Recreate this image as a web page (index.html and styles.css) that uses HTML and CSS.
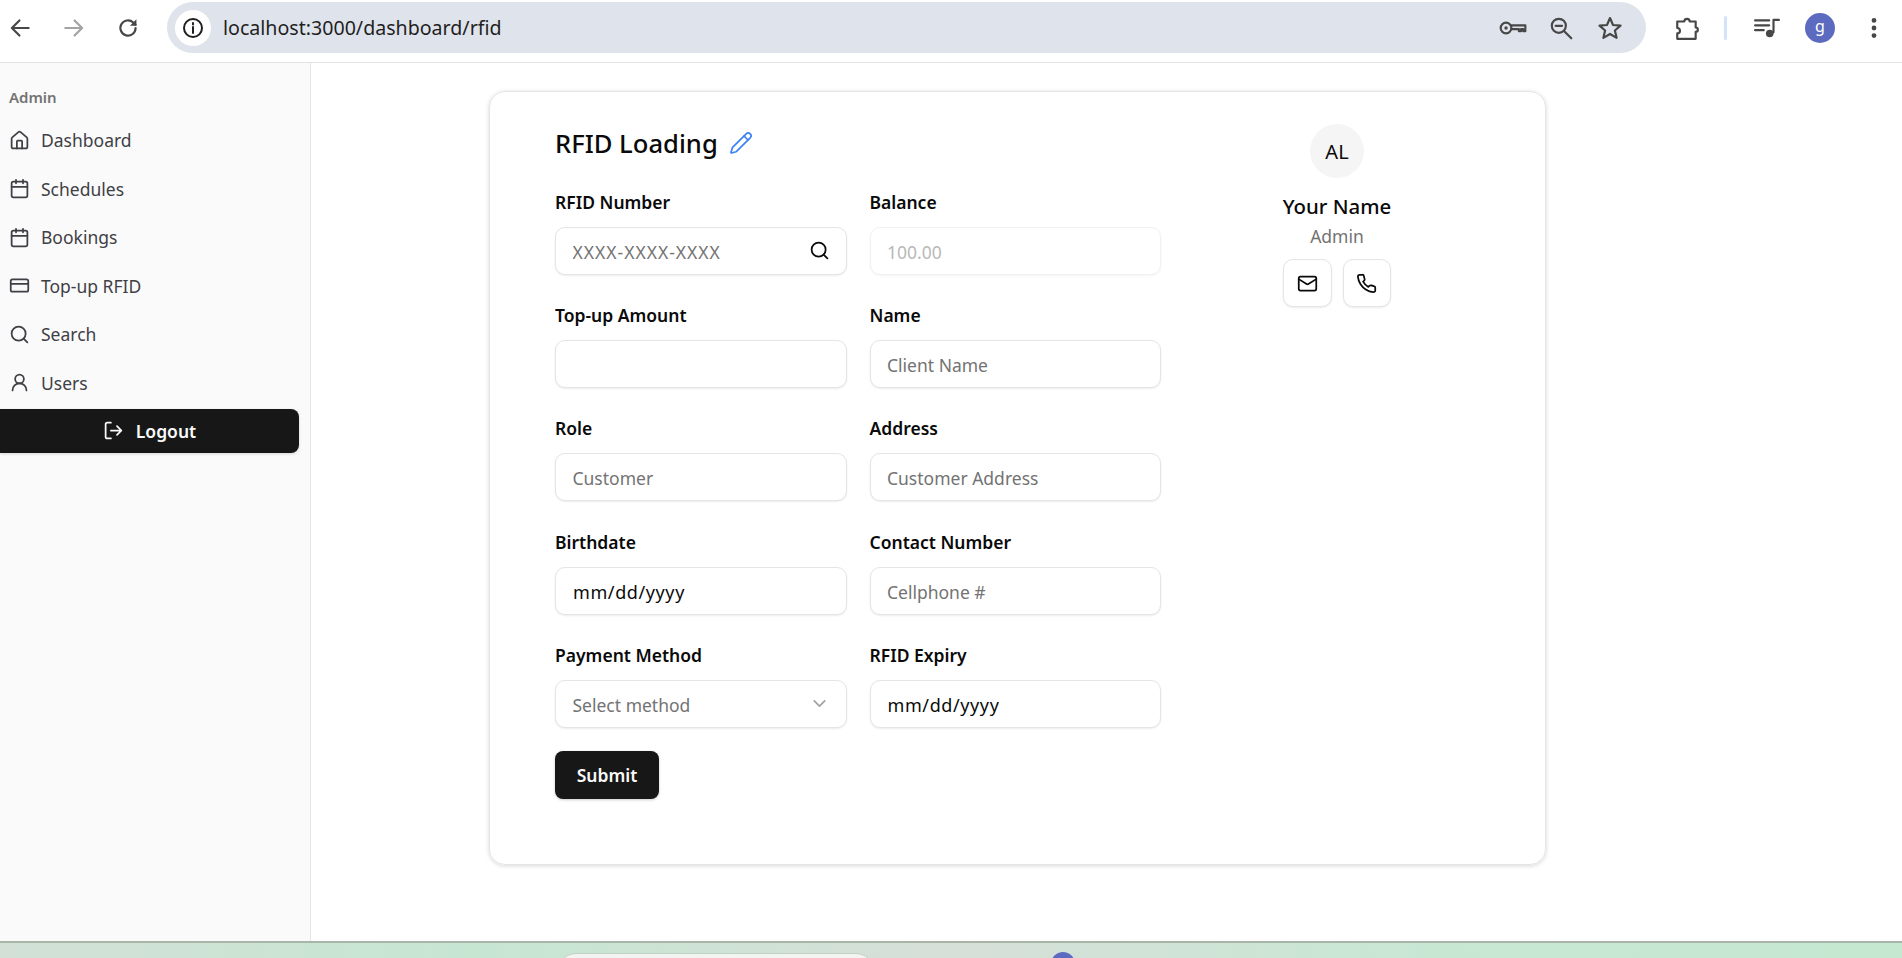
FILE: index.html
```html
<!DOCTYPE html>
<html lang="en">
<head>
  <meta charset="utf-8">
  <meta name="viewport" content="width=device-width, initial-scale=1">
  <title>RFID Loading</title>
  <link rel="stylesheet" href="styles.css">
</head>
<body>
  <header class="toolbar">
    <div class="nav-buttons">
      <svg class="tool-icon" viewBox="0 0 24 24"><path d="M20 12H5M11.5 5 4.5 12l7 7"/></svg>
      <svg class="tool-icon tool-icon-off" viewBox="0 0 24 24"><path d="M4 12h15M12.5 5l7 7-7 7"/></svg>
      <svg class="tool-icon" viewBox="0 0 24 24"><path d="M19 12a7 7 0 1 1-2.200-5.100L19 9"/><path class="solid" d="M19.800 4v6h-6z"/></svg>
    </div>
    <div class="omnibox">
      <span class="site-info">
        <svg viewBox="0 0 24 24"><circle cx="12" cy="12" r="9"/><path d="M12 11v6"/><path d="M12 7v1.600"/></svg>
      </span>
      <span class="url">localhost:3000/dashboard/rfid</span>
      <div class="omni-actions">
        <svg class="tool-icon key" viewBox="0 0 28 24"><circle cx="7.500" cy="12" r="5"/><circle class="solid" cx="7.500" cy="12" r="1.600"/><path d="M12.500 9.500h13v5.500h-2v-2h-2v2h-2v-2h-7"/></svg>
        <svg class="tool-icon" viewBox="0 0 24 24"><circle cx="10" cy="10" r="6.500"/><path d="M15 15l6.500 6.500M7 10h6"/></svg>
        <svg class="tool-icon" viewBox="0 0 24 24"><path d="M12 2.800l2.800 6.400 6.900.6-5.200 4.500 1.600 6.800-6.100-3.600-6.100 3.600 1.600-6.800-5.200-4.500 6.900-.6z"/></svg>
      </div>
    </div>
    <svg class="tool-icon puzzle" viewBox="0 0 24 24"><path d="M3 6h6.500c0-1.500 1-2.500 2.500-2.500s2.500 1 2.500 2.500H20v5.500c1.500 0 2 1 2 2s-.5 2-2 2V22H3v-5c2 0 2.500-1.500 2.500-2.500S5 12 3 12z"/></svg>
    <span class="divider"></span>
    <svg class="tool-icon queue" viewBox="0 0 24 24"><path d="M1 5h13M1 9.500h13M1 14h8M18 16V4.500h5"/><circle class="solid" cx="14.500" cy="17" r="3.500"/></svg>
    <span class="profile-dot">g</span>
    <svg class="tool-icon kebab" viewBox="0 0 24 24"><circle class="solid" cx="12" cy="5" r="2.200"/><circle class="solid" cx="12" cy="12" r="2.200"/><circle class="solid" cx="12" cy="19" r="2.200"/></svg>
  </header>

  <div class="app">
    <aside class="sidebar">
      <div class="sidebar-label">Admin</div>
      <nav>
        <a class="nav-item" href="#">
          <svg class="icon" viewBox="0 0 24 24"><path d="M15 21v-8a1 1 0 0 0-1-1h-4a1 1 0 0 0-1 1v8"/><path d="M3 10a2 2 0 0 1 .7-1.500l7-6a2 2 0 0 1 2.600 0l7 6a2 2 0 0 1 .7 1.500v9a2 2 0 0 1-2 2H5a2 2 0 0 1-2-2z"/></svg>
          Dashboard
        </a>
        <a class="nav-item" href="#">
          <svg class="icon" viewBox="0 0 24 24"><path d="M8 2v4M16 2v4"/><rect x="3" y="4" width="18" height="18" rx="2"/><path d="M3 10h18"/></svg>
          Schedules
        </a>
        <a class="nav-item" href="#">
          <svg class="icon" viewBox="0 0 24 24"><path d="M8 2v4M16 2v4"/><rect x="3" y="4" width="18" height="18" rx="2"/><path d="M3 10h18"/></svg>
          Bookings
        </a>
        <a class="nav-item" href="#">
          <svg class="icon" viewBox="0 0 24 24"><rect x="2" y="5" width="20" height="14" rx="2"/><path d="M2 10h20"/></svg>
          Top-up RFID
        </a>
        <a class="nav-item" href="#">
          <svg class="icon" viewBox="0 0 24 24"><circle cx="11" cy="11" r="8"/><path d="m21 21-4.300-4.300"/></svg>
          Search
        </a>
        <a class="nav-item" href="#">
          <svg class="icon" viewBox="0 0 24 24"><circle cx="12" cy="8" r="5"/><path d="M20 21a8 8 0 0 0-16 0"/></svg>
          Users
        </a>
      </nav>
      <button class="logout" type="button">
        <svg class="icon" viewBox="0 0 24 24"><path d="M9 21H5a2 2 0 0 1-2-2V5a2 2 0 0 1 2-2h4"/><path d="m16 17 5-5-5-5M21 12H9"/></svg>
        Logout
      </button>
    </aside>

    <main class="content">
      <section class="card">
        <form class="rfid-form">
          <h1 class="title">
            RFID Loading
            <svg class="pencil" viewBox="0 0 24 24"><path d="M21.200 6.800a2.800 2.800 0 0 0-4-4L3.800 16.200a2 2 0 0 0-.5.8l-1.300 4.400a.5.500 0 0 0 .6.600l4.400-1.300a2 2 0 0 0 .8-.5z"/><path d="m15 5 4 4"/></svg>
          </h1>
          <div class="form-grid">
            <div class="field">
              <label for="rfid">RFID Number</label>
              <div class="input-wrap">
                <input id="rfid" class="rfid-input" type="text" placeholder="XXXX-XXXX-XXXX">
                <svg class="input-icon" viewBox="0 0 24 24"><circle cx="11" cy="11" r="8"/><path d="m21 21-4.300-4.300"/></svg>
              </div>
            </div>
            <div class="field">
              <label for="balance">Balance</label>
              <input id="balance" type="text" placeholder="100.00" disabled>
            </div>
            <div class="field">
              <label for="amount">Top-up Amount</label>
              <input id="amount" type="text">
            </div>
            <div class="field">
              <label for="name">Name</label>
              <input id="name" type="text" placeholder="Client Name">
            </div>
            <div class="field">
              <label for="role">Role</label>
              <input id="role" type="text" placeholder="Customer">
            </div>
            <div class="field">
              <label for="address">Address</label>
              <input id="address" type="text" placeholder="Customer Address">
            </div>
            <div class="field">
              <label for="birthdate">Birthdate</label>
              <input id="birthdate" class="date" type="text" value="mm/dd/yyyy">
            </div>
            <div class="field">
              <label for="contact">Contact Number</label>
              <input id="contact" type="text" placeholder="Cellphone #">
            </div>
            <div class="field">
              <label for="method">Payment Method</label>
              <div class="input-wrap">
                <select id="method"><option>Select method</option></select>
                <svg class="input-icon chevron" viewBox="0 0 24 24"><path d="m6 9 6 6 6-6"/></svg>
              </div>
            </div>
            <div class="field">
              <label for="expiry">RFID Expiry</label>
              <input id="expiry" class="date" type="text" value="mm/dd/yyyy">
            </div>
          </div>
          <button class="submit" type="button">Submit</button>
        </form>

        <div class="profile">
          <div class="avatar">AL</div>
          <div class="profile-name">Your Name</div>
          <div class="profile-role">Admin</div>
          <div class="profile-actions">
            <button class="icon-button" type="button">
              <svg class="icon" viewBox="0 0 24 24"><rect x="2" y="4" width="20" height="16" rx="2"/><path d="m22 7-8.970 5.700a1.940 1.940 0 0 1-2.060 0L2 7"/></svg>
            </button>
            <button class="icon-button" type="button">
              <svg class="icon" viewBox="0 0 24 24"><path d="M22 16.920v3a2 2 0 0 1-2.180 2 19.790 19.790 0 0 1-8.630-3.070 19.500 19.500 0 0 1-6-6 19.790 19.790 0 0 1-3.070-8.670A2 2 0 0 1 4.110 2h3a2 2 0 0 1 2 1.720 12.840 12.840 0 0 0 .7 2.810 2 2 0 0 1-.45 2.110L8.090 9.910a16 16 0 0 0 6 6l1.270-1.270a2 2 0 0 1 2.110-.45 12.840 12.840 0 0 0 2.810.7A2 2 0 0 1 22 16.920z"/></svg>
            </button>
          </div>
        </div>
      </section>
    </main>
  </div>

  <footer class="desktop-strip">
    <span class="strip-window"></span>
    <span class="strip-dot"></span>
  </footer>
</body>
</html>
```

FILE: styles.css
```css
* {
  box-sizing: border-box;
}

html, body {
  height: 100%;
}

body {
  margin: 0;
  display: flex;
  flex-direction: column;
  overflow: hidden;
  background-color: #fff;
  color: #0a0a0a;
  font-family: "Noto Sans", "Open Sans", sans-serif;
}

svg {
  fill: none;
  stroke: currentColor;
  stroke-linecap: round;
  stroke-linejoin: round;
}

svg .solid {
  fill: currentColor;
  stroke: none;
}

/* browser bar */
.toolbar {
  display: flex;
  align-items: center;
  flex: 0 0 63px;
  height: 63px;
  padding: 0 0 7px 7px;
  border-bottom: 1px solid #e1e3e6;
  color: #474747;
}

.nav-buttons {
  display: flex;
  gap: 28px;
}

.tool-icon {
  flex: none;
  width: 26px;
  height: 26px;
  stroke-width: 2;
}

.tool-icon-off {
  color: #a3a3a3;
}

.omnibox {
  display: flex;
  align-items: center;
  flex: none;
  width: 1479px;
  height: 51px;
  margin-left: 26px;
  padding: 0 23px 0 8px;
  border-radius: 26px;
  background-color: #dfe4ec;
}

.site-info {
  display: flex;
  align-items: center;
  justify-content: center;
  flex: none;
  width: 36px;
  height: 36px;
  border-radius: 50%;
  background-color: #fff;
  color: #1f1f1f;
}

.site-info svg {
  width: 24px;
  height: 24px;
  stroke-width: 2;
}

.url {
  margin-left: 12px;
  font-size: 19.600px;
  color: #1f1f1f;
}

.omni-actions {
  display: flex;
  align-items: center;
  gap: 23px;
  margin-left: auto;
}

.key {
  width: 30px;
  margin-right: -3px;
}

.puzzle {
  margin-left: 28px;
}

.divider {
  flex: none;
  width: 3px;
  height: 24px;
  margin-left: 24px;
  border-radius: 2px;
  background-color: #d3e3fd;
}

.queue {
  margin-left: 27px;
}

.profile-dot {
  display: flex;
  align-items: center;
  justify-content: center;
  flex: none;
  width: 30px;
  height: 30px;
  margin-left: 25px;
  padding-bottom: 3px;
  border-radius: 50%;
  background-color: #5c6bc0;
  color: #fff;
  font-size: 16px;
}

.kebab {
  margin-left: 26px;
}

/* app */
.app {
  display: flex;
  flex: 1;
  min-height: 0;
}

.sidebar {
  flex: 0 0 311px;
  padding-top: 17px;
  border-right: 1px solid #e5e5e5;
  background-color: #fafafa;
}

.sidebar-label {
  display: flex;
  align-items: center;
  height: 36px;
  padding: 0 0 2px 9px;
  font-size: 15px;
  font-weight: 600;
  color: #737373;
}

.nav-item {
  display: flex;
  align-items: center;
  gap: 11px;
  height: 48.500px;
  padding-left: 9px;
  font-size: 17.500px;
  color: #3f3f46;
  text-decoration: none;
}

.icon {
  flex: none;
  width: 21px;
  height: 21px;
  stroke-width: 2;
}

.logout {
  display: flex;
  align-items: center;
  justify-content: center;
  gap: 12px;
  width: 299px;
  height: 44px;
  margin-top: 1.500px;
  border: 0;
  border-radius: 0 8px 8px 0;
  background-color: #171717;
  box-shadow: 0 1px 3px rgba(0, 0, 0, 0.15);
  color: #fafafa;
  font-family: inherit;
  font-size: 17.500px;
  font-weight: 600;
}

.content {
  flex: 1;
  padding: 28px 0 0 178px;
}

.card {
  display: flex;
  width: 1057px;
  height: 774px;
  padding: 33px 66px 66px 65px;
  border: 1px solid #e5e5e5;
  border-radius: 16px;
  box-shadow: 0 1px 4px rgba(0, 0, 0, 0.16);
}

.rfid-form {
  flex: 0 0 606px;
}

.title {
  display: flex;
  align-items: center;
  gap: 11px;
  height: 36px;
  margin: 0 0 30px;
  font-size: 25.600px;
  font-weight: 500;
  color: #0a0a0a;
}

.pencil {
  width: 24px;
  height: 24px;
  stroke-width: 1.700;
  color: #3b82f6;
}

.form-grid {
  display: grid;
  grid-template-columns: 1fr 1fr;
  gap: 29.200px 23px;
}

.field label {
  display: block;
  height: 24px;
  margin-bottom: 12px;
  font-size: 17.500px;
  line-height: 22px;
  font-weight: 600;
  color: #0a0a0a;
}

.field input, .field select {
  display: block;
  width: 100%;
  height: 48px;
  padding: 2px 16.500px 0;
  border: 1px solid #e5e5e5;
  border-radius: 10px;
  background-color: #fff;
  box-shadow: 0 1px 2px rgba(0, 0, 0, 0.08);
  color: #737373;
  font-family: inherit;
  font-size: 17.500px;
  outline: none;
  appearance: none;
}

.field input::placeholder {
  color: #737373;
  opacity: 1;
}

.field input:disabled {
  opacity: 0.5;
}

.field input.rfid-input {
  letter-spacing: 1px;
}

.field input.date {
  padding-left: 17px;
  color: #0a0a0a;
  font-size: 18px;
  letter-spacing: 0.600px;
}

.input-wrap {
  position: relative;
}

.input-icon {
  position: absolute;
  top: 13px;
  right: 17px;
  width: 21px;
  height: 21px;
  stroke-width: 2;
  color: #0a0a0a;
}

.chevron {
  color: #a3a3a3;
}

.submit {
  display: block;
  width: 104px;
  height: 48px;
  margin-top: 23px;
  border: 0;
  border-radius: 8px;
  background-color: #171717;
  box-shadow: 0 1px 3px rgba(0, 0, 0, 0.2);
  color: #fafafa;
  font-family: inherit;
  font-size: 17.500px;
  font-weight: 600;
}

.profile {
  display: flex;
  flex-direction: column;
  align-items: center;
  flex: 0 0 284px;
  margin-top: -1px;
  margin-left: auto;
}

.avatar {
  display: flex;
  align-items: center;
  justify-content: center;
  width: 54px;
  height: 54px;
  border-radius: 50%;
  background-color: #f5f5f5;
  font-size: 20px;
}

.profile-name {
  margin-top: 13px;
  font-size: 20.400px;
  line-height: 30px;
  font-weight: 500;
}

.profile-role {
  margin-top: 1px;
  font-size: 17.500px;
  line-height: 28px;
  color: #737373;
}

.profile-actions {
  display: flex;
  gap: 11px;
  margin-top: 9px;
}

.icon-button {
  display: flex;
  align-items: center;
  justify-content: center;
  width: 48.500px;
  height: 48px;
  padding: 0;
  border: 1px solid #e5e5e5;
  border-radius: 10px;
  background-color: #fff;
  box-shadow: 0 1px 2px rgba(0, 0, 0, 0.08);
  color: #0a0a0a;
}

/* bit of the desktop showing under the window */
.desktop-strip {
  display: flex;
  flex: 0 0 17px;
  height: 17px;
  padding-left: 558px;
  overflow: hidden;
  border-top: 2px solid #a9b5a9;
  background: linear-gradient(90deg, #d2e0d6, #c6e6d2 25%, #d6dfd8 50%, #c7e7d3 75%, #c5e8d1);
}

.strip-window {
  flex: none;
  width: 316px;
  height: 30px;
  margin-top: 10px;
  border-radius: 18px 18px 0 0;
  border: 1px solid #c0d0c4;
  background-color: #f2f4f2;
}

.strip-dot {
  flex: none;
  width: 24px;
  height: 24px;
  margin: 9px 0 0 177px;
  border-radius: 50%;
  background-color: #5c6bc0;
}
```
